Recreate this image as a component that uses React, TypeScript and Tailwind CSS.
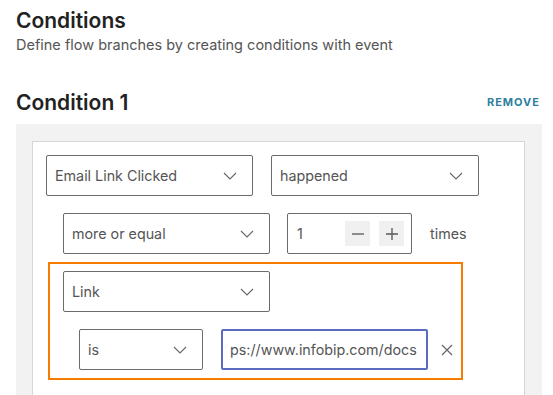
import React from 'react';

function Chevron() {
  return (
    <svg width="14" height="8" viewBox="0 0 14 8" fill="none" className="shrink-0">
      <path d="M1 1l6 6 6-6" stroke="#666" strokeWidth="1.1" />
    </svg>
  );
}

function Select({ value, width }: { value: string; width: string }) {
  return (
    <div
      className={`${width} h-[41px] shrink-0 flex items-center justify-between pl-[8px] pr-[15px] border border-[#6b6b6b] rounded-[2px] text-[14.3px] text-[#555]`}
    >
      <span>{value}</span>
      <Chevron />
    </div>
  );
}

export default function App() {
  return (
    <div className="w-[553px] h-[395px] overflow-hidden bg-white font-['Inter',sans-serif]">
      <div className="pl-4 pt-[7px]">
        <h1 className="text-[21px] leading-[27px] font-semibold text-[#222]">Conditions</h1>
        <p className="text-[14.5px] leading-[18px] text-[#555] mt-[2px]">
          Define flow branches by creating conditions with event
        </p>
      </div>

      <div className="flex items-center justify-between pl-4 pr-[13px] mt-[35px]">
        <h2 className="text-[21px] leading-[27px] font-semibold text-[#222]">Condition 1</h2>
        <button className="text-[11px] font-bold tracking-[1px] text-[#2f7fa0]">REMOVE</button>
      </div>

      <div className="ml-4 w-[526px] mt-[8px] bg-[#f2f2f2] pt-[17px] pl-4 pb-10">
        <div className="w-[493px] bg-white border border-[#d6d6d6] pt-[13px] pl-[13px]">
          <div className="flex gap-[18px]">
            <Select value="Email Link Clicked" width="w-[207px]" />
            <Select value="happened" width="w-[208px]" />
          </div>

          <div className="flex items-center mt-[17px] ml-[17px]">
            <Select value="more or equal" width="w-[207px]" />
            <div className="ml-[17px] w-[125px] h-[41px] flex items-center border border-[#6b6b6b] rounded-[2px] pl-[9px] pr-[7px] text-[14.3px] text-[#555]">
              <span className="flex-1">1</span>
              <div className="w-[25px] h-[25px] bg-[#f0f0f0] flex items-center justify-center">
                <svg width="14" height="14" viewBox="0 0 14 14">
                  <path d="M1 7h12" stroke="#555" strokeWidth="1.3" />
                </svg>
              </div>
              <div className="ml-[9px] w-[25px] h-[25px] bg-[#f0f0f0] flex items-center justify-center">
                <svg width="14" height="14" viewBox="0 0 14 14">
                  <path d="M1 7h12M7 1v12" stroke="#555" strokeWidth="1.3" />
                </svg>
              </div>
            </div>
            <span className="ml-[18px] text-[14.3px] text-[#555]">times</span>
          </div>

          <div className="mt-[8px] ml-[2px] w-[415px] border-2 border-[#f57c00] pt-[7px] pl-[13px] pb-[8px]">
            <Select value="Link" width="w-[207px]" />
            <div className="flex items-center mt-[17px] ml-[16px]">
              <Select value="is" width="w-[124px]" />
              <div className="ml-[18px] w-[207px] h-[41px] flex items-center border-2 border-[#5b6cc0] rounded-[2px] pl-[7px] text-[14.3px] text-[#555] overflow-hidden whitespace-nowrap">
                ps://www.infobip.com/docs
              </div>
              <svg width="12" height="12" viewBox="0 0 12 12" className="ml-[13px]">
                <path d="M1 1l10 10M11 1L1 11" stroke="#666" strokeWidth="1.2" />
              </svg>
            </div>
          </div>

          <div className="flex items-center mt-[9px] ml-[27px] text-[12px] font-bold tracking-[1px] text-[#2f7fa0]">
            <span className="text-[16px] font-normal">+</span>
            <span className="ml-[8px]">PROPERTY</span>
          </div>
        </div>
      </div>
    </div>
  );
}
